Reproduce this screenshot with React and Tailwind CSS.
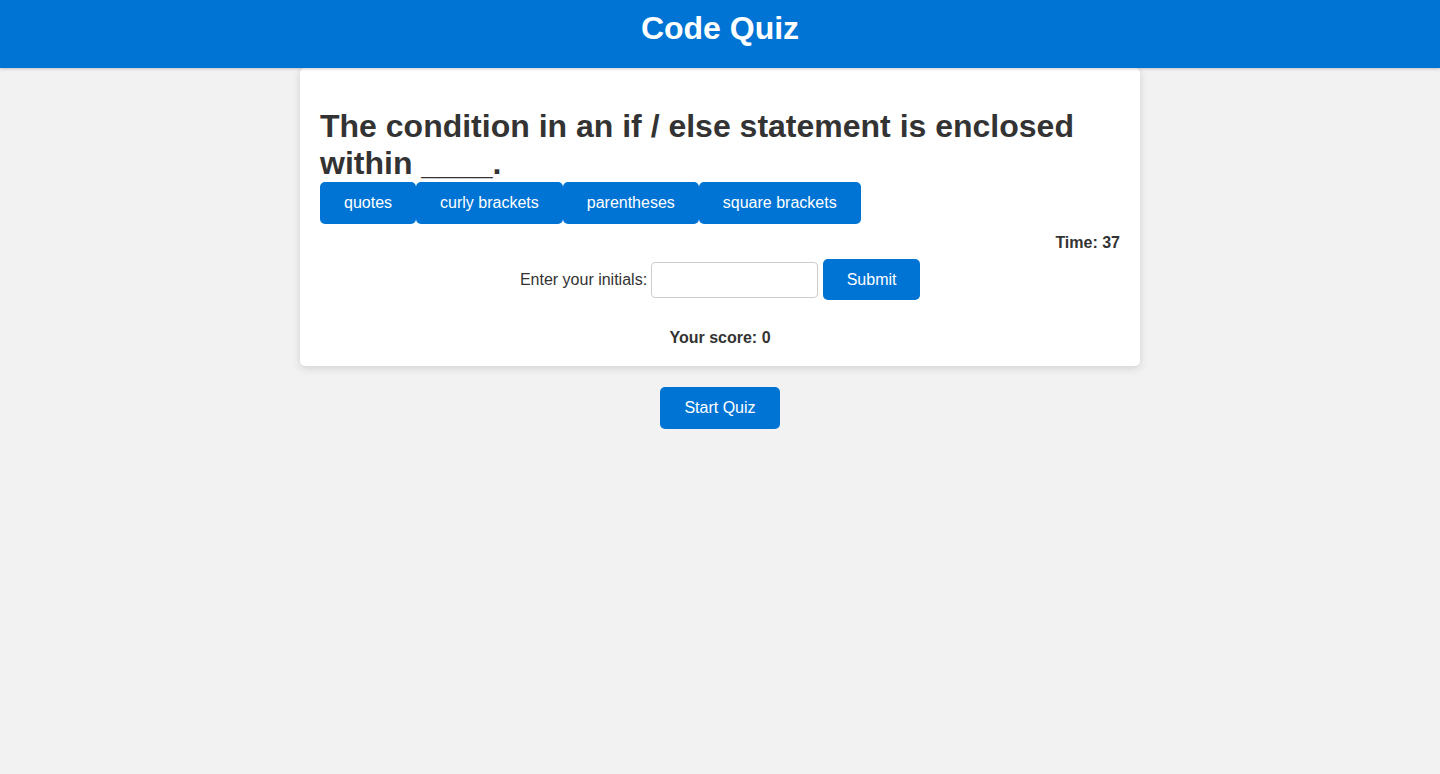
import React, { useState } from 'react';

const choices = ['quotes', 'curly brackets', 'parentheses', 'square brackets'];

const btn = 'bg-[#0074d4] text-white text-[16px] leading-[18px] rounded-[5px] cursor-pointer';

export default function App() {
  const [initials, setInitials] = useState('');
  const time = 37;
  const score = 0;

  return (
    <div className="min-h-[774px] bg-[#f2f2f2] text-[#333] font-['Liberation_Sans',Arial,sans-serif]">
      <header className="h-[68px] bg-[#0074d4] flex items-center justify-center pb-[12px] shadow-[0_1px_3px_rgba(0,0,0,0.2)] relative z-10">
        <h1 className="text-white text-[32px] font-bold leading-[37px]">Code Quiz</h1>
      </header>

      <main className="flex flex-col items-center">
        <section className="w-[840px] bg-white rounded-[5px] shadow-[0_2px_8px_rgba(0,0,0,0.15)] px-[20px] pt-[40px] pb-[19px]">
          <h2 className="text-[32px] font-bold leading-[37px]">
            The condition in an if / else statement is enclosed within ____.
          </h2>

          {/* Answer choices */}
          <div className="flex">
            {choices.map((c) => (
              <button key={c} type="button" className={`${btn} px-[24px] py-[12px]`}>
                {c}
              </button>
            ))}
          </div>

          <p className="mt-[10px] text-right font-bold leading-[18px]">Time: {time}</p>

          <div className="mt-[7px] flex items-center justify-center">
            <label htmlFor="initials" className="mr-[4px] leading-[18px]">Enter your initials:</label>
            <input
              id="initials"
              value={initials}
              onChange={(e) => setInitials(e.target.value)}
              className="w-[167px] h-[36px] border border-[#ccc] rounded-[4px] px-[8px] outline-none"
            />
            <button type="button" className={`${btn} ml-[5px] w-[97px] h-[41px]`}>Submit</button>
          </div>

          <p className="mt-[29px] text-center font-bold leading-[18px]">Your score: {score}</p>
        </section>

        <button type="button" className={`${btn} mt-[21px] w-[120px] h-[42px]`}>Start Quiz</button>
      </main>
    </div>
  );
}
